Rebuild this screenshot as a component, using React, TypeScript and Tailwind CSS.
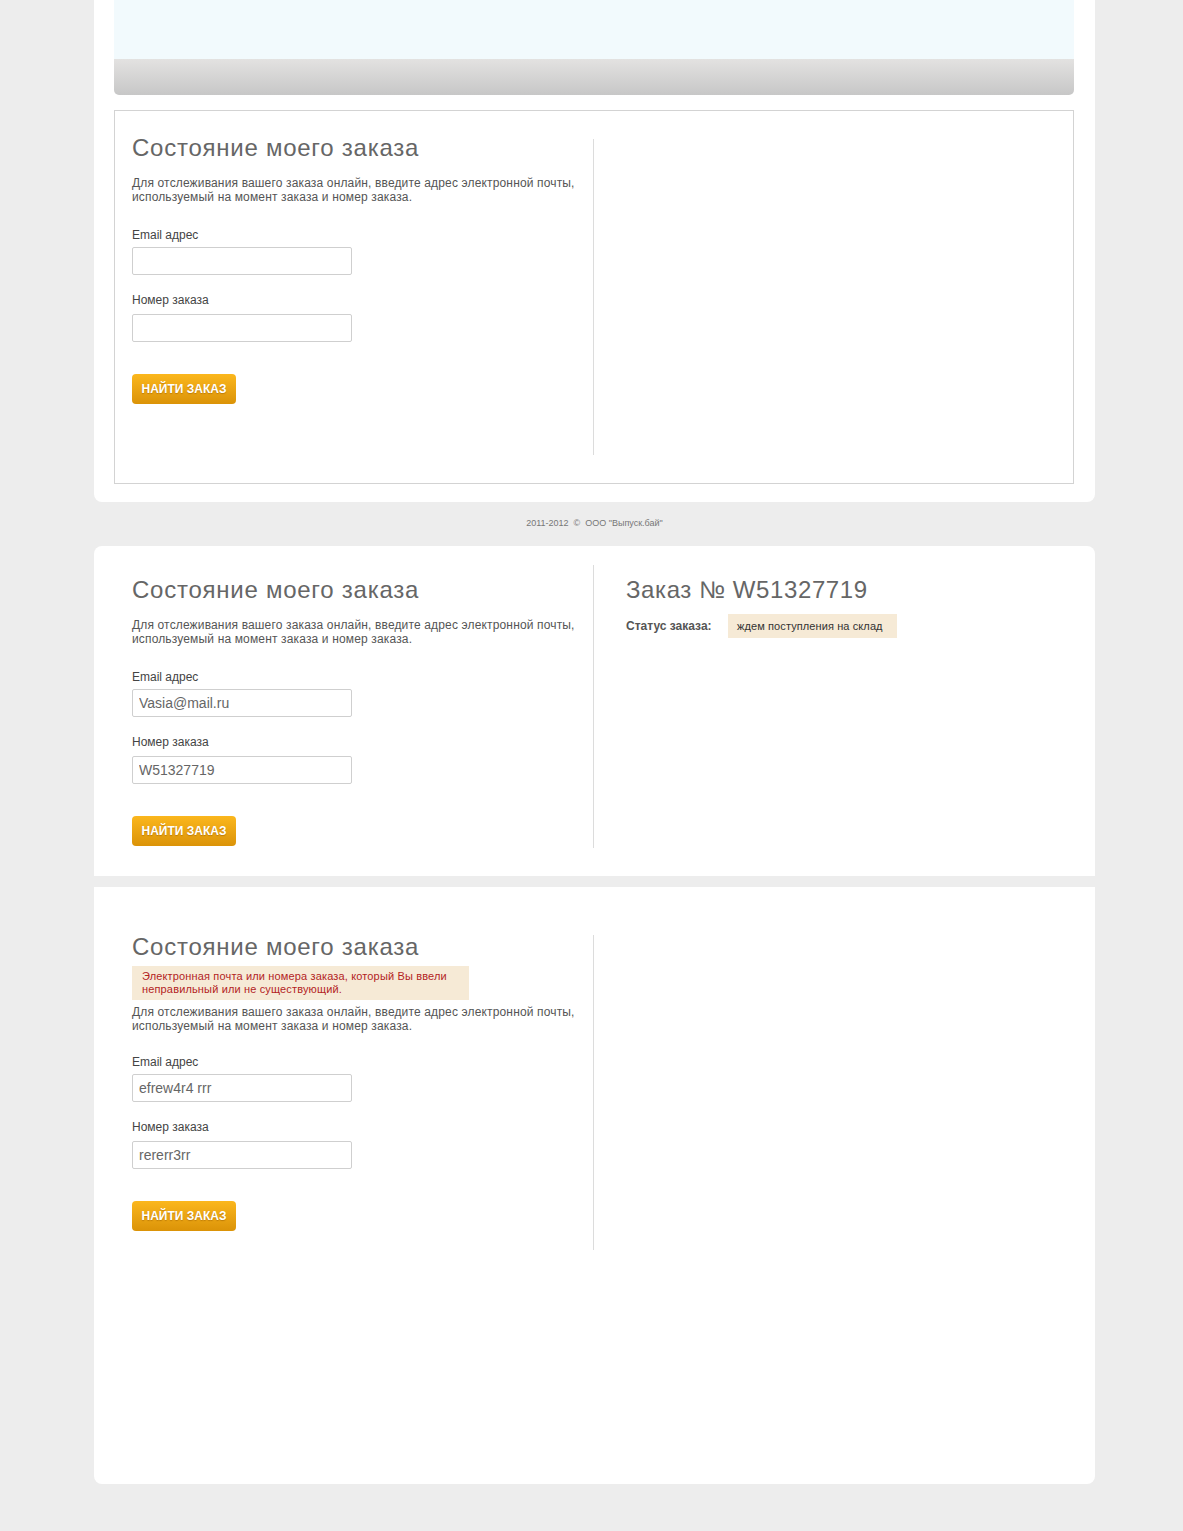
import React from "react";

const font = "font-['Liberation_Sans',Arial,sans-serif]";

function Field({ label, value, mt }: { label: string; value?: string; mt: string }) {
  return (
    <>
      <div className={`${mt} text-[12px] leading-[14px] text-[#444]`}>{label}</div>
      <input
        readOnly
        value={value ?? ""}
        className="mt-[5px] block h-[28px] w-[220px] rounded-[2px] border border-[#cfcfcf] bg-white px-[6px] text-[14px] text-[#666] outline-none"
      />
    </>
  );
}

function OrderForm({
  email,
  order,
  error,
}: {
  email?: string;
  order?: string;
  error?: boolean;
}) {
  return (
    <div className="w-[461px]">
      <h2 className="text-[24px] leading-[28px] tracking-[0.75px] text-[#666]">Состояние моего заказа</h2>
      {error && (
        <div className="mt-[5px] h-[34px] w-[337px] bg-[#f6ead6] pl-[10px] pt-[4px] text-[11px] leading-[13px] tracking-[0.15px] text-[#b3241f]">
          Электронная почта или номера заказа, который Вы ввели
          <br />
          неправильный или не существующий.
        </div>
      )}
      <p className={`${error ? "mt-[5px]" : "mt-[14px]"} text-[12px] leading-[14px] tracking-[0.15px] text-[#555]`}>
        Для отслеживания вашего заказа онлайн, введите адрес электронной почты,
        <br />
        используемый на момент заказа и номер заказа.
      </p>
      <Field label="Email адрес" value={email} mt={error ? "mt-[22px]" : "mt-[24px]"} />
      <div className="mt-[18px] text-[12px] leading-[14px] text-[#444]">Номер заказа</div>
      <input
        readOnly
        value={order ?? ""}
        className="mt-[7px] block h-[28px] w-[220px] rounded-[2px] border border-[#cfcfcf] bg-white px-[6px] text-[14px] text-[#666] outline-none"
      />
      <button className="mt-[32px] block h-[30px] w-[104px] rounded-[4px] bg-gradient-to-b from-[#fbb71d] to-[#db9307] text-[12px] font-bold text-white [text-shadow:0_1px_1px_rgba(150,90,0,0.5)]">
        НАЙТИ ЗАКАЗ
      </button>
    </div>
  );
}

export default function App() {
  return (
    <div className={`${font} min-h-[1531px] bg-[#ededed] pb-[47px]`}>
      {/* panel 1 */}
      <div className="ml-[94px] w-[1001px] rounded-b-[8px] bg-white pb-[18px]">
        <div className="ml-[20px] mr-[21px] h-[59px] bg-[#f2fafd]" />
        <div className="ml-[20px] mr-[21px] h-[36px] rounded-b-[5px] bg-gradient-to-b from-[#e3e2e1] to-[#c7c7c7]" />
        <div className="ml-[20px] mr-[21px] mt-[15px] border border-[#d3d3d3] pb-[28px] pl-[17px] pt-[23px]">
          <div className="flex items-start">
            <OrderForm />
            <div className="mt-[5px] h-[316px] w-px bg-[#dcdcdc]" />
          </div>
        </div>
      </div>

      {/* footer */}
      <div className="flex h-[44px] items-center justify-center pl-[6px] text-[9px] text-[#777]">
        2011-2012&nbsp;&nbsp;©&nbsp;&nbsp;ООО "Выпуск.бай"
      </div>

      {/* panel 2 */}
      <div className="ml-[94px] w-[1001px] rounded-t-[8px] bg-white pb-[28px] pl-[38px] pt-[19px]">
        <div className="flex items-start">
          <div className="pt-[11px]">
            <OrderForm email="Vasia@mail.ru" order="W51327719" />
          </div>
          <div className="h-[283px] w-px bg-[#dcdcdc]" />
          <div className="pl-[32px] pt-[11px]">
            <h2 className="text-[24px] leading-[28px] tracking-[0.6px] text-[#666]">Заказ № W51327719</h2>
            <div className="mt-[10px] flex items-center">
              <span className="w-[102px] text-[12px] font-bold text-[#555]">Статус заказа:</span>
              <span className="flex h-[24px] w-[169px] items-center bg-[#f6ead6] pl-[9px] text-[11px] tracking-[0.1px] text-[#333]">
                ждем поступления на склад
              </span>
            </div>
          </div>
        </div>
      </div>

      {/* panel 3 */}
      <div className="ml-[94px] mt-[11px] h-[597px] w-[1001px] rounded-b-[8px] bg-white pl-[38px] pt-[46px]">
        <div className="flex items-start">
          <OrderForm email="efrew4r4 rrr" order="rererr3rr" error />
          <div className="mt-[2px] h-[315px] w-px bg-[#dcdcdc]" />
        </div>
      </div>
    </div>
  );
}
